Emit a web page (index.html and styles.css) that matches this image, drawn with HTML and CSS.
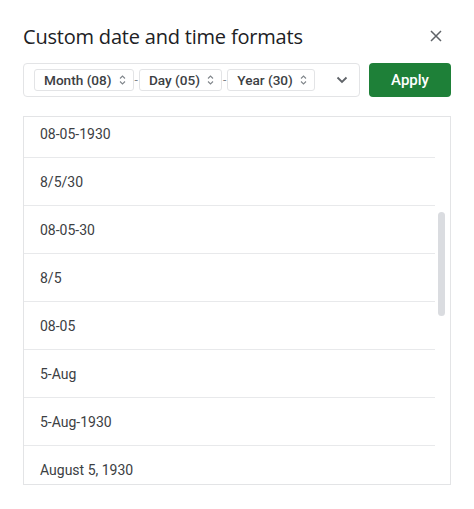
FILE: index.html
```html
<!DOCTYPE html>
<html>
<head>
<meta charset="utf-8">
<link rel="stylesheet" href="styles.css">
</head>
<body>
<div class="dialog">
  <div class="header">
    <div class="title">Custom date and time formats</div>
    <svg class="close" viewBox="0 0 12 12" width="12" height="12"><path d="M1 1L11 11M11 1L1 11" stroke="#5f6368" stroke-width="1.5" fill="none"/></svg>
  </div>
  <div class="toolbar">
    <div class="input">
      <div class="chip">Month (08)<svg class="spin" viewBox="0 0 7 12" width="7" height="12"><path d="M1 4.5L3.5 2L6 4.5M1 7.5L3.5 10L6 7.5" stroke="#80868b" stroke-width="1.1" fill="none"/></svg></div>
      <span class="dash">-</span>
      <div class="chip">Day (05)<svg class="spin" viewBox="0 0 7 12" width="7" height="12"><path d="M1 4.5L3.5 2L6 4.5M1 7.5L3.5 10L6 7.5" stroke="#80868b" stroke-width="1.1" fill="none"/></svg></div>
      <span class="dash">-</span>
      <div class="chip">Year (30)<svg class="spin" viewBox="0 0 7 12" width="7" height="12"><path d="M1 4.5L3.5 2L6 4.5M1 7.5L3.5 10L6 7.5" stroke="#80868b" stroke-width="1.1" fill="none"/></svg></div>
      <svg class="chev" viewBox="0 0 12 8" width="12" height="8"><path d="M1.5 1.5L6 6L10.5 1.5" stroke="#5f6368" stroke-width="1.8" fill="none"/></svg>
    </div>
    <button class="apply">Apply</button>
  </div>
  <div class="list">
    <div class="rows">
      <div class="row">08-05-1930</div>
      <div class="row">8/5/30</div>
      <div class="row">08-05-30</div>
      <div class="row">8/5</div>
      <div class="row">08-05</div>
      <div class="row">5-Aug</div>
      <div class="row">5-Aug-1930</div>
      <div class="row">August 5, 1930</div>
    </div>
    <div class="thumb"></div>
  </div>
</div>
</body>
</html>
```
FILE: styles.css
```css
html, body {
  margin: 0;
  padding: 0;
  background: #ffffff;
}
body {
  font-family: Roboto, "Liberation Sans", sans-serif;
  color: #3c4043;
}
.dialog {
  padding: 0 23px;
  width: 428px;
}
.header {
  display: flex;
  align-items: center;
  justify-content: space-between;
  height: 36px;
  padding-top: 18px;
}
.title {
  font-family: "Open Sans", Roboto, sans-serif;
  font-size: 20px;
  color: #202124;
  letter-spacing: -0.2px;
}
.close {
  margin-right: 9px;
}
.toolbar {
  display: flex;
  gap: 9px;
  margin-top: 9px;
}
.input {
  flex: 0 0 337px;
  box-sizing: border-box;
  height: 34px;
  border: 1px solid #e3e4e6;
  border-radius: 4px;
  display: flex;
  align-items: center;
  padding-left: 10px;
}
.chip {
  height: 22px;
  box-sizing: border-box;
  border: 1px solid #e3e4e6;
  border-radius: 3px;
  display: flex;
  align-items: center;
  padding: 0 7px 0 9px;
  font-size: 13.6px;
  font-weight: 500;
  color: #3c4043;
  gap: 7px;
}
.dash {
  font-size: 12px;
  color: #80868b;
  margin: 0 1px;
}
.chev {
  margin-left: auto;
  margin-right: 11px;
}
.apply {
  width: 82px;
  height: 34px;
  border: none;
  border-radius: 4px;
  background: #1e8038;
  color: #ffffff;
  font-family: Roboto, sans-serif;
  font-size: 15px;
  font-weight: 500;
  padding: 0;
}
.list {
  position: relative;
  margin-top: 19px;
  height: 369px;
  box-sizing: border-box;
  border: 1px solid #e3e4e6;
  overflow: hidden;
}
.rows {
  margin-top: -7px;
  margin-right: 15px;
}
.row {
  height: 48px;
  box-sizing: border-box;
  border-bottom: 1px solid #e8e9eb;
  display: flex;
  align-items: center;
  padding-left: 16px;
  font-size: 14px;
  color: #3c4043;
}
.thumb {
  position: absolute;
  right: 5px;
  top: 95px;
  width: 7px;
  height: 104px;
  border-radius: 4px;
  background: #dadce0;
}
```
